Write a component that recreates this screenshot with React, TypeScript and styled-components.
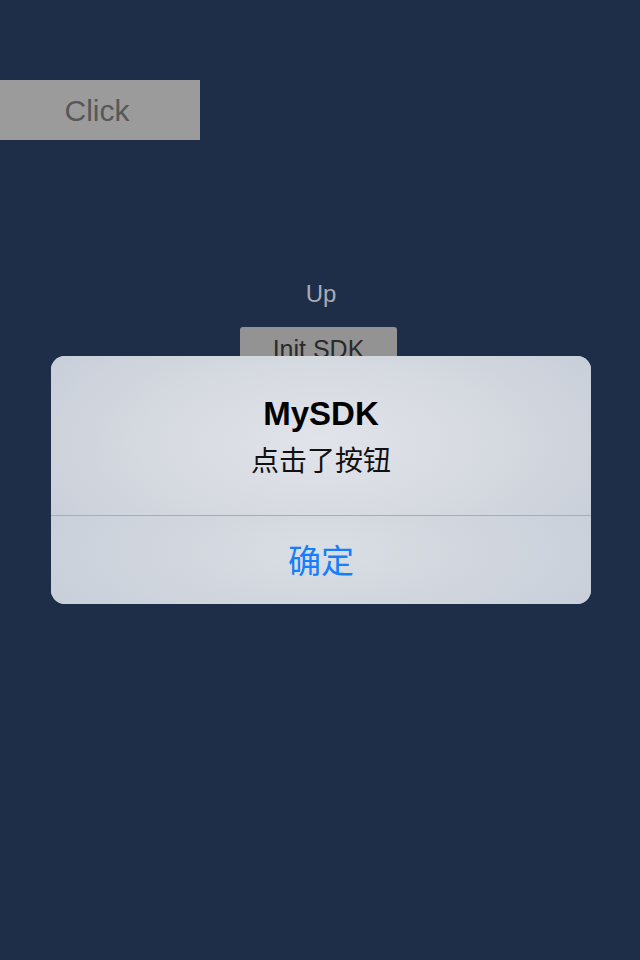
import styled, { createGlobalStyle } from 'styled-components';

const GlobalStyle = createGlobalStyle`
  html, body {
    margin: 0;
    padding: 0;
    background: #1e2d48;
  }
  body {
    font-family: 'Liberation Sans', 'Noto Sans CJK SC', Arial, sans-serif;
  }
`;

const App = () => {
  return (
    <Screen>
      <GlobalStyle />
      <ClickButton>Click</ClickButton>
      <CenterColumn>
        <UpLabel>Up</UpLabel>
        <InitButton>Init SDK</InitButton>
      </CenterColumn>

      <Overlay>
        <AlertBox>
          <AlertBody>
            <AlertTitle>MySDK</AlertTitle>
            <AlertMessage>点击了按钮</AlertMessage>
          </AlertBody>
          <AlertAction>确定</AlertAction>
        </AlertBox>
      </Overlay>
    </Screen>
  );
};

const Screen = styled.div`
  position: relative;
  width: 640px;
  height: 960px;
  padding-top: 80px;
  box-sizing: border-box;
  background: #1e2d48;
  overflow: hidden;
`;

const ClickButton = styled.div`
  width: 200px;
  height: 60px;
  display: flex;
  align-items: center;
  justify-content: center;
  background: #9b9b9b;
  color: #575757;
  font-size: 30px;
  box-sizing: border-box;
  padding-right: 6px;
  padding-top: 2px;
`;

const CenterColumn = styled.div`
  display: flex;
  flex-direction: column;
  align-items: center;
  margin-top: 139px;
`;

const UpLabel = styled.div`
  color: #a7acb5;
  font-size: 24px;
  line-height: 30px;
  padding-left: 2px;
`;

const InitButton = styled.div`
  margin-top: 18px;
  width: 157px;
  height: 44px;
  margin-left: -3px;
  border-radius: 3px;
  background: #939393;
  color: #2a2a2a;
  font-size: 25px;
  display: flex;
  justify-content: center;
  padding-top: 8px;
  box-sizing: border-box;
`;

const Overlay = styled.div`
  position: absolute;
  inset: 0;
  display: flex;
  justify-content: center;
  padding-top: 356px;
  padding-left: 2px;
  box-sizing: border-box;
`;

const AlertBox = styled.div`
  width: 540px;
  height: 248px;
  border-radius: 14px;
  overflow: hidden;
  display: flex;
  flex-direction: column;
  background: #cdd3dc;
`;

const AlertBody = styled.div`
  height: 160px;
  display: flex;
  flex-direction: column;
  align-items: center;
  padding-top: 37px;
  box-sizing: border-box;
  border-bottom: 1px solid #a9acb3;
  background: radial-gradient(ellipse 320px 150px at 50% 55%, #e1e4ea 0%, #d5d9e0 55%, #c9cfd9 100%);
`;

const AlertTitle = styled.div`
  font-size: 33px;
  font-weight: bold;
  color: #000;
  line-height: 42px;
`;

const AlertMessage = styled.div`
  margin-top: 6px;
  font-size: 28px;
  color: #111;
  line-height: 36px;
  font-family: 'Noto Sans CJK SC', sans-serif;
`;

const AlertAction = styled.div`
  flex: 1;
  display: flex;
  align-items: center;
  justify-content: center;
  padding-bottom: 2px;
  font-size: 33px;
  color: #157efb;
  font-family: 'Noto Sans CJK SC', sans-serif;
  background: radial-gradient(ellipse 320px 110px at 50% 40%, #dadee5 0%, #d1d6de 50%, #c8cfd9 100%);
`;

export default App;
